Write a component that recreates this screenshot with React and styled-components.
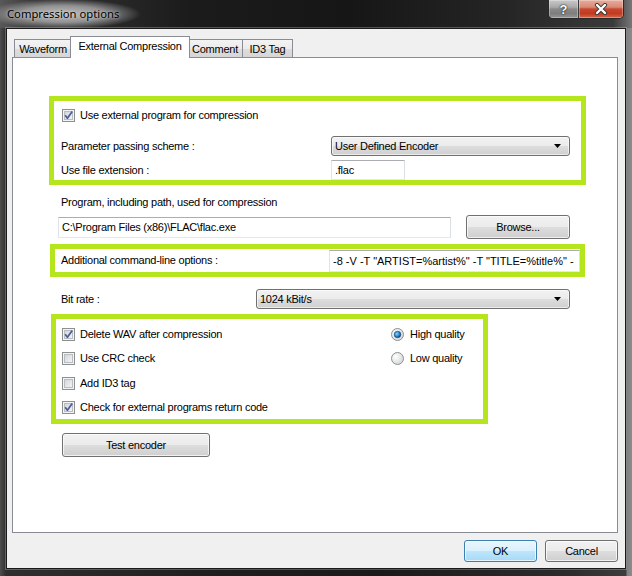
import React, { useId } from 'react';
import styled, { createGlobalStyle } from 'styled-components';

const FONT = `"Liberation Sans", Arial, sans-serif`;

const Global = createGlobalStyle`
  html, body { margin: 0; padding: 0; }
  body { width: 632px; height: 576px; overflow: hidden; background: #1c1c1c; }
  #root { width: 632px; height: 576px; }
`;

const Window = styled.div`
  width: 632px;
  height: 576px;
  display: flex;
  flex-direction: column;
  background: linear-gradient(to right, #4e4e4e 0px, #2f2f2f 6px, #1e1e1e 35%, #1a1a1a 60%, #2c2c2c 90%, #3c3c3c 626px, #7f7f7f 627px, #8c8c8c 100%);
  font-family: ${FONT};
`;

const TitleBar = styled.div`
  height: 28px;
  flex: none;
  display: flex;
  align-items: flex-start;
  background:
    radial-gradient(ellipse 78px 15px at 63px 14px, rgba(200,200,200,0.95) 0%, rgba(170,170,170,0.8) 55%, rgba(90,90,90,0) 100%),
    linear-gradient(to right, #585858 0%, #353535 6%, #1b1b1b 30%, #161616 55%, #252525 80%, #3a3a3a 97%, #777 100%);
`;

const Title = styled.div`
  margin: 6px 0 0 7px;
  font-family: "Noto Sans", "Open Sans", sans-serif;
  font-size: 11.25px;
  line-height: 16px;
  color: #000;
  text-shadow: 0 0 3px rgba(235,235,235,0.7);
  flex: 1;
`;

const Controls = styled.div`
  display: flex;
  margin-right: 8px;
  height: 19px;
  border: 1px solid #2a2a2a;
  border-top: none;
  border-radius: 0 0 5px 5px;
  overflow: hidden;
  box-sizing: border-box;
`;

const CtrlBtn = styled.div`
  width: ${p => p.$w}px;
  height: 18px;
  display: flex;
  align-items: center;
  justify-content: center;
  box-shadow: inset 0 0 0 1px rgba(255,255,255,0.3);
  background: ${p => p.$close
    ? 'linear-gradient(#e7ad9c 0%, #d88a76 40%, #c8472e 50%, #c23a20 75%, #d2694c 100%)'
    : 'linear-gradient(#c9c9c9 0%, #a9a9a9 40%, #8a8a8a 50%, #7e7e7e 75%, #969696 100%)'};
  border-right: ${p => p.$close ? 'none' : '1px solid #3a3a3a'};
  color: #fff;
  font-family: ${FONT};
  font-weight: bold;
  font-size: 13px;
  text-shadow: 0 0 2px #222, 0 0 1px #000;
`;

const Frame = styled.div`
  flex: 1;
  display: flex;
  padding: 0 6px 7px 6px;
`;

const Client = styled.div`
  flex: 1;
  display: flex;
  flex-direction: column;
  background: #f0f0f0;
  border: 1px solid #1a1a1a;
  box-shadow: 0 0 0 1px rgba(255,255,255,0.25);
  padding: 7px 7px 6px 5px;
  font-size: 11px;
  letter-spacing: -0.25px;
  color: #000;
`;

const TabRow = styled.div`
  display: flex;
  align-items: flex-end;
  height: 21px;
  padding-left: 2px;
`;

const Tab = styled.div`
  box-sizing: border-box;
  width: ${p => p.$w}px;
  height: ${p => (p.$active ? 22 : 18)}px;
  margin: ${p => (p.$active ? '0 -2px -1px -2px' : p.$first ? '0' : '0 0 0 -1px')};
  position: relative;
  z-index: ${p => (p.$active ? 2 : 1)};
  border: 1px solid #898c95;
  border-bottom: none;
  background: ${p => (p.$active ? '#fff' : 'linear-gradient(#f3f3f3, #ebebeb 50%, #dedede 51%, #d6d6d6)')};
  display: flex;
  align-items: center;
  justify-content: center;
  padding-bottom: ${p => (p.$active ? 4 : 0)}px;
  white-space: nowrap;
`;

const Panel = styled.div`
  box-sizing: border-box;
  height: 476px;
  background: #fff;
  border: 1px solid #898c95;
  display: flex;
  flex-direction: column;
  align-items: flex-start;
`;

const GreenBox = styled.div`
  box-sizing: border-box;
  width: ${p => p.$w}px;
  height: ${p => p.$h}px;
  margin: ${p => p.$mt}px 0 0 ${p => p.$ml}px;
  border: 5px solid #b5e61d;
`;

const Box1 = styled(GreenBox)`
  padding: 8px 0 0 7px;
  display: flex;
  flex-direction: column;
`;

const FormRow = styled.div`
  display: grid;
  grid-template-columns: ${p => p.$label}px auto;
  align-items: center;
  height: 20px;
  margin-top: ${p => p.$mt || 0}px;
`;

const CheckLabel = styled.label`
  display: flex;
  align-items: center;
  gap: ${p => p.$gap || 5}px;
  height: ${p => p.$h || 13}px;
  margin-left: ${p => p.$ml || 0}px;
  white-space: nowrap;
  line-height: 13px;
`;

const Text = styled.div`
  line-height: 13px;
  white-space: nowrap;
  margin: ${p => p.$mt || 0}px 0 0 ${p => p.$ml || 0}px;
`;

const Combo = styled.div`
  box-sizing: border-box;
  width: ${p => p.$w}px;
  height: 20px;
  border: 1px solid #707070;
  border-radius: 3px;
  background: linear-gradient(#f2f2f2 0%, #ebebeb 50%, #dddddd 51%, #cfcfcf 100%);
  box-shadow: inset 0 0 0 1px rgba(255,255,255,0.6);
  display: flex;
  align-items: center;
  justify-content: space-between;
  padding: 0 8px 0 3px;
  white-space: nowrap;
`;

const TextBox = styled.div`
  box-sizing: border-box;
  width: ${p => p.$w}px;
  height: ${p => p.$h || 21}px;
  border: 1px solid;
  border-color: #abadb3 #dbdfe6 #e3e9ef #e2e3ea;
  background: #fff;
  display: flex;
  align-items: center;
  padding: 0 2px 0 3px;
  overflow: hidden;
  white-space: nowrap;
  letter-spacing: ${p => (p.$wide ? '0' : '-0.25px')};
`;

const ProgramRow = styled.div`
  display: flex;
  align-items: center;
  gap: 15px;
  height: 24px;
  margin: 6px 0 0 45px;
`;

const Button = styled.div`
  box-sizing: border-box;
  width: ${p => p.$w}px;
  height: ${p => p.$h || 24}px;
  margin: ${p => p.$m || 0};
  border: 1px solid ${p => (p.$default ? '#3c7fb1' : '#707070')};
  border-radius: 3px;
  background: ${p => (p.$default
    ? 'linear-gradient(#eaf6fd 0%, #d9f0fc 50%, #bee6fd 51%, #a7d9f5 100%)'
    : 'linear-gradient(#f2f2f2 0%, #ebebeb 50%, #dddddd 51%, #cfcfcf 100%)')};
  box-shadow: inset 0 0 0 1px rgba(255,255,255,0.7);
  display: flex;
  align-items: center;
  justify-content: center;
  white-space: nowrap;
`;

const Box2 = styled(GreenBox)`
  display: flex;
  align-items: center;
  justify-content: space-between;
  padding-left: 6px;
`;

const BitRow = styled(FormRow)`
  margin: 12px 0 0 48px;
`;

const Box3 = styled(GreenBox)`
  display: grid;
  grid-template-columns: 329px auto;
  grid-auto-rows: 24.5px;
  align-items: center;
  padding: 3px 0 0 6px;
`;

const ButtonBar = styled.div`
  display: flex;
  justify-content: flex-end;
  gap: 8px;
  margin-top: 7px;
`;

function CheckBox({ checked }) {
  const id = useId();
  return (
    <svg width="13" height="13" viewBox="0 0 13 13">
      <defs>
        <linearGradient id={id} x1="0" y1="0" x2="1" y2="1">
          <stop offset="0" stopColor="#d2d4d8" />
          <stop offset="1" stopColor="#f6f6f6" />
        </linearGradient>
      </defs>
      <rect x="0.5" y="0.5" width="12" height="12" fill="#f4f4f4" stroke="#8e8f8f" />
      <rect x="2.5" y="2.5" width="8" height="8" fill={`url(#${id})`} stroke="#b9bcc1" />
      {checked && (
        <path d="M3.2 6.3 L5.4 9.2 L10.2 2.4" stroke="#4a5f97" strokeWidth="1.7" fill="none" strokeLinejoin="round" />
      )}
    </svg>
  );
}

function Radio({ checked }) {
  const id = useId();
  return (
    <svg width="13" height="13" viewBox="0 0 13 13">
      <defs>
        <radialGradient id={`${id}a`} cx="0.35" cy="0.35" r="0.7">
          <stop offset="0" stopColor="#ffffff" />
          <stop offset="1" stopColor="#d4d6d9" />
        </radialGradient>
        <radialGradient id={`${id}b`} cx="0.4" cy="0.4" r="0.6">
          <stop offset="0" stopColor="#8fd2f7" />
          <stop offset="0.6" stopColor="#2a8ad0" />
          <stop offset="1" stopColor="#0f3f6e" />
        </radialGradient>
      </defs>
      <circle cx="6.5" cy="6.5" r="6" fill={`url(#${id}a)`} stroke="#8e8f8f" />
      {checked && <circle cx="6.5" cy="6.5" r="3.3" fill={`url(#${id}b)`} stroke="#1a4a78" strokeWidth="0.6" />}
    </svg>
  );
}

function Arrow() {
  return (
    <svg width="7" height="4" viewBox="0 0 7 4">
      <polygon points="0,0 7,0 3.5,4" fill="#000" />
    </svg>
  );
}

function CloseGlyph() {
  return (
    <svg width="14" height="12" viewBox="0 0 14 12">
      <path d="M3 2 L11 10 M11 2 L3 10" stroke="#3a3a3a" strokeWidth="4.2" strokeLinecap="round" />
      <path d="M3 2 L11 10 M11 2 L3 10" stroke="#fff" strokeWidth="2.4" strokeLinecap="round" />
    </svg>
  );
}

export default function App() {
  return (
    <>
      <Global />
      <Window>
        <TitleBar>
          <Title>Compression options</Title>
          <Controls>
            <CtrlBtn $w={29}>?</CtrlBtn>
            <CtrlBtn $w={44} $close><CloseGlyph /></CtrlBtn>
          </Controls>
        </TitleBar>
        <Frame>
          <Client>
            <TabRow>
              <Tab $w={58} $first>Waveform</Tab>
              <Tab $w={120} $active>External Compression</Tab>
              <Tab $w={56}>Comment</Tab>
              <Tab $w={51}>ID3 Tag</Tab>
            </TabRow>
            <Panel>
              <Box1 $w={537} $h={89} $mt={38} $ml={36}>
                <CheckLabel $ml={1}>
                  <CheckBox checked />
                  <span>Use external program for compression</span>
                </CheckLabel>
                <FormRow $label={270} $mt={14}>
                  <Text>Parameter passing scheme :</Text>
                  <Combo $w={239}>
                    <span>User Defined Encoder</span>
                    <Arrow />
                  </Combo>
                </FormRow>
                <FormRow $label={270} $mt={4}>
                  <Text>Use file extension :</Text>
                  <TextBox $w={74} $h={20}>.flac</TextBox>
                </FormRow>
              </Box1>

              <Text $mt={11} $ml={48}>Program, including path, used for compression</Text>
              <ProgramRow>
                <TextBox $w={393}>C:\Program Files (x86)\FLAC\flac.exe</TextBox>
                <Button $w={104}>Browse...</Button>
              </ProgramRow>

              <Box2 $w={535} $h={33} $mt={5} $ml={37}>
                <Text>Additional command-line options :</Text>
                <TextBox $w={251} $h={22} $wide>
                  -8 -V -T "ARTIST=%artist%" -T "TITLE=%title%" -
                </TextBox>
              </Box2>

              <BitRow $label={195}>
                <Text>Bit rate :</Text>
                <Combo $w={314}>
                  <span>1024 kBit/s</span>
                  <Arrow />
                </Combo>
              </BitRow>

              <Box3 $w={437} $h={110} $mt={5} $ml={38}>
                <CheckLabel><CheckBox checked /><span>Delete WAV after compression</span></CheckLabel>
                <CheckLabel $gap={6}><Radio checked /><span>High quality</span></CheckLabel>
                <CheckLabel><CheckBox /><span>Use CRC check</span></CheckLabel>
                <CheckLabel $gap={6}><Radio /><span>Low quality</span></CheckLabel>
                <CheckLabel><CheckBox /><span>Add ID3 tag</span></CheckLabel>
                <span />
                <CheckLabel><CheckBox checked /><span>Check for external programs return code</span></CheckLabel>
              </Box3>

              <Button $w={148} $m="9px 0 0 49px">Test encoder</Button>
            </Panel>
            <ButtonBar>
              <Button $w={73} $h={22} $default>OK</Button>
              <Button $w={73} $h={22}>Cancel</Button>
            </ButtonBar>
          </Client>
        </Frame>
      </Window>
    </>
  );
}
